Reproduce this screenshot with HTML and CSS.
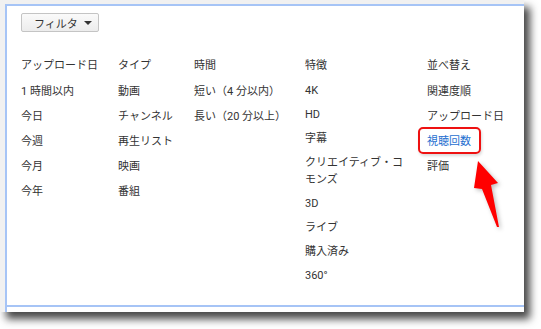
FILE: index.html
```html
<!DOCTYPE html>
<html lang="ja">
  <head>
    <meta charset="UTF-8">
    <title>フィルタ</title>
    <link rel="stylesheet" href="styles.css">
  </head>
  <body>
    <div class="shot">
      <div class="page">
        <div class="frame">
          <button type="button" class="filter-btn">フィルタ<span class="caret"></span></button>

          <div class="filters">
            <ul class="group">
              <li class="group-title">アップロード日</li>
              <li>1 時間以内</li>
              <li>今日</li>
              <li>今週</li>
              <li>今月</li>
              <li>今年</li>
            </ul>
            <ul class="group">
              <li class="group-title">タイプ</li>
              <li>動画</li>
              <li>チャンネル</li>
              <li>再生リスト</li>
              <li>映画</li>
              <li>番組</li>
            </ul>
            <ul class="group">
              <li class="group-title">時間</li>
              <li>短い（4 分以内）</li>
              <li>長い（20 分以上）</li>
            </ul>
            <ul class="group narrow">
              <li class="group-title">特徴</li>
              <li>4K</li>
              <li>HD</li>
              <li>字幕</li>
              <li>クリエイティブ・コモンズ</li>
              <li>3D</li>
              <li>ライブ</li>
              <li>購入済み</li>
              <li>360°</li>
            </ul>
            <ul class="group">
              <li class="group-title">並べ替え</li>
              <li>関連度順</li>
              <li>アップロード日</li>
              <li class="selected">視聴回数</li>
              <li>評価</li>
            </ul>
          </div>
        </div>

        <svg class="pointer" width="40" height="80" viewBox="0 0 40 80">
          <polygon points="11,4 31,26 24,28 32,70 30,70 15,32 7,31" fill="#ff0000"/>
        </svg>
      </div>
    </div>
  </body>
</html>
```

FILE: styles.css
```css
:root {
  --text-color: #333333;
  --link-color: #1f6fd0;
  --frame-blue: #a6c4f6;
  --mark-red: #ee1111;
}

body {
  margin: 0;
  min-height: 100vh;
  background: #ffffff;
  font-family: 'Roboto', 'Noto Sans CJK JP', sans-serif;
  font-size: 11px;
  color: var(--text-color);
}

.shot {
  width: 524px;
  height: 312px;
  box-sizing: border-box;
  padding: 4px 0 0 5px;
  background: #f1f1f1;
  box-shadow: 6px 7px 8px rgba(0, 0, 0, 0.72);
}

.page {
  position: relative;
  height: 308px;
  box-sizing: border-box;
  background: #ffffff;
  border-top: 2px solid var(--frame-blue);
  border-left: 2px solid var(--frame-blue);
}

.frame {
  height: 301px;
  box-sizing: border-box;
  padding: 7px 0 0 14px;
  border-bottom: 2px solid var(--frame-blue);
}

.filter-btn {
  display: flex;
  align-items: center;
  height: 19px;
  width: 78px;
  padding: 0 0 0 12px;
  font-family: inherit;
  font-size: 11px;
  color: var(--text-color);
  background: linear-gradient(#fafafa, #ececec);
  border: 1px solid #c4c4c4;
  border-radius: 2px;
}

.caret {
  margin-left: 6px;
  border-left: 4px solid transparent;
  border-right: 4px solid transparent;
  border-top: 4px solid #333333;
}

.filters {
  display: grid;
  grid-template-columns: 97px 76px 111px 122px 1fr;
  margin-top: 21px;
}

.group {
  list-style: none;
  margin: 0;
  padding: 0;
}

.group li {
  line-height: 17px;
  padding: 4px 0;
}

.group .group-title {
  margin-bottom: 1px;
}

.group.narrow {
  padding-right: 16px;
}

.group.narrow li {
  padding: 3.5px 0;
}

.selected {
  position: relative;
  color: var(--link-color);
}

.selected::after {
  content: '';
  position: absolute;
  left: -9px;
  top: -2px;
  width: 59px;
  height: 23px;
  border: 2px solid var(--mark-red);
  border-radius: 5px;
  box-shadow: 1px 2px 3px rgba(0, 0, 0, 0.15);
}

.pointer {
  position: absolute;
  left: 460px;
  top: 151px;
  filter: drop-shadow(2px 2px 2px rgba(0, 0, 0, 0.25));
}
```
